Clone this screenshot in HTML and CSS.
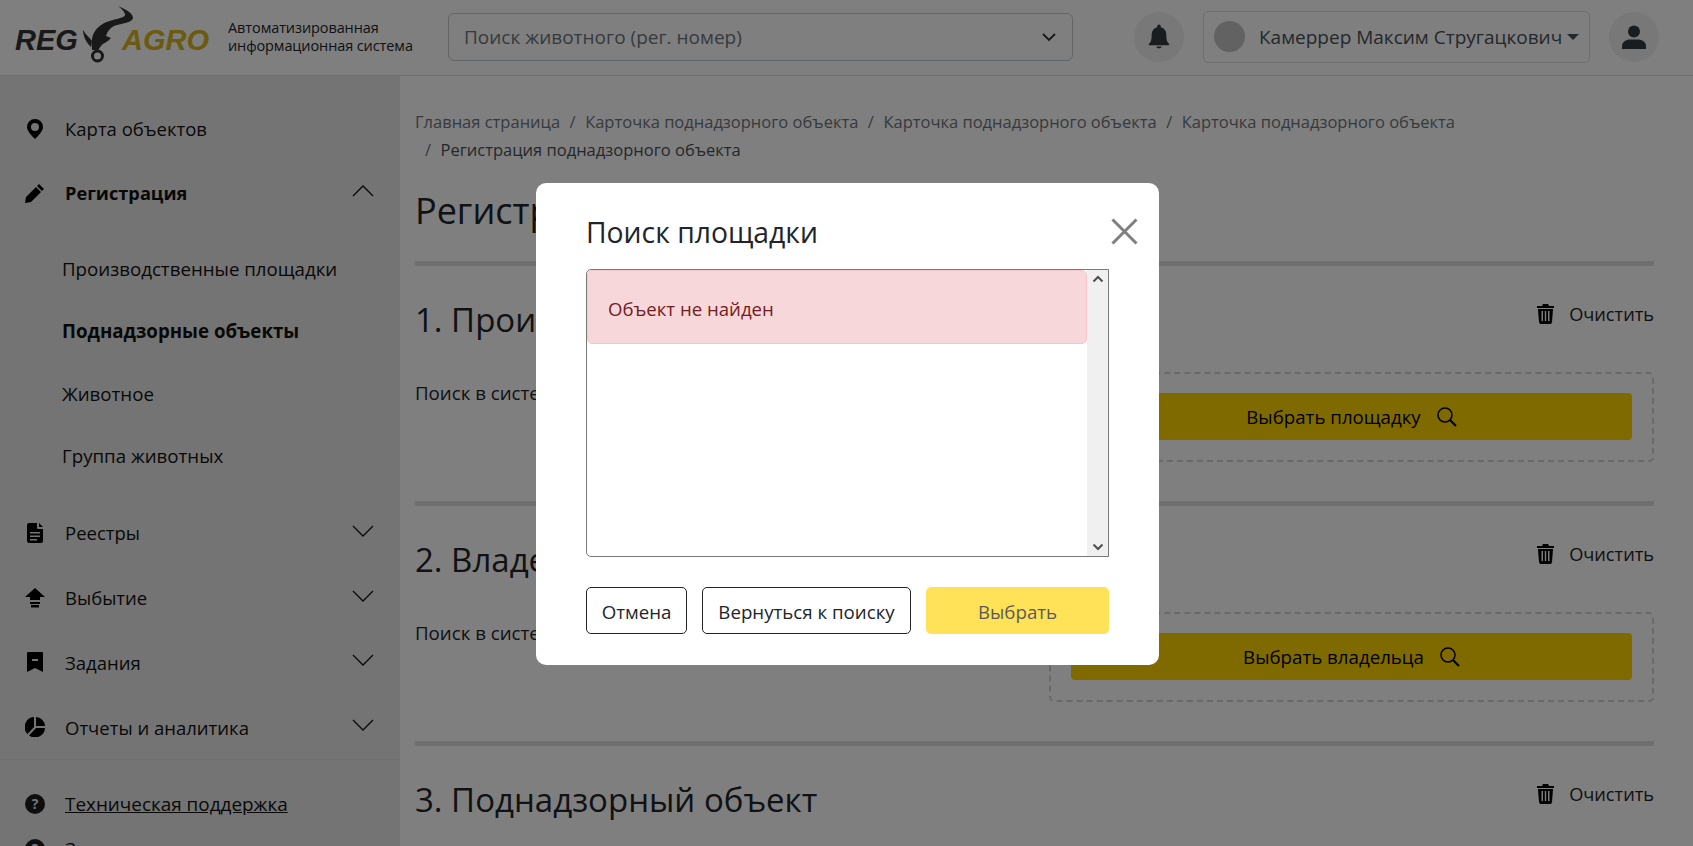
FILE: index.html
```html
<!DOCTYPE html>
<html lang="ru">
<head>
  <meta charset="UTF-8" />
  <title>RegAgro</title>
  <link rel="stylesheet" href="styles.css">
</head>
<body>
  <header class="topbar">
    <div class="logo">
      <span class="logo-reg">REG</span>
      <svg class="logo-bull" viewBox="82 4 55 60" width="55" height="60">
        <path fill="#333" d="M118 6C125 9 133 13 133 18C132 23 122 23 114 26C110 28 107 32 106 36L111 38C108 42 103 43 101 46L98 50L92 50C92 46 91 40 93 35C96 27 104 22 113 20C120 18 126 17 125 14C124 11 121 8 118 6Z"/>
        <path fill="#333" d="M83 30C86 35 90 38 92 41L91 47C87 43 83 37 83 30Z"/>
        <circle cx="97.500" cy="56" r="5" fill="none" stroke="#333" stroke-width="3"/>
      </svg>
      <span class="logo-agro">AGRO</span>
    </div>
    <div class="logo-caption">Автоматизированная<br>информационная система</div>
    <div class="animal-search">
      <span>Поиск животного (рег. номер)</span>
      <svg width="16" height="16" viewBox="0 0 16 16"><path d="M2 5l6 6 6-6" fill="none" stroke="#333" stroke-width="1.800"/></svg>
    </div>
    <div class="round-btn">
      <svg width="22" height="25" viewBox="0 0 24 26"><path fill="#343a40" d="M12 0a2 2 0 0 1 2 2v1c4 1 6 4 6 8 0 6 1 8 3 10 .5.6.2 1.500-.8 1.500H1.800c-1 0-1.300-.9-.8-1.500 2-2 3-4 3-10 0-4 2-7 6-8V2a2 2 0 0 1 2-2zM9 24h6a3 2 0 0 1-6 0z"/></svg>
    </div>
    <div class="user-box">
      <span class="avatar"></span>
      <span class="user-name">Камеррер Максим Стругацкович</span>
      <span class="caret"></span>
    </div>
    <div class="round-btn">
      <svg width="24" height="24" viewBox="0 0 24 24"><circle cx="12" cy="6.500" r="6" fill="#343a40"/><path fill="#343a40" d="M0 24v-3c0-4 4-6.500 8-6.500h8c4 0 8 2.500 8 6.500v3z"/></svg>
    </div>
  </header>

  <div class="layout">
    <aside class="sidebar">
      <nav class="nav">
        <a class="nav-item nav-first">
          <svg class="nav-icon" viewBox="0 0 16 20"><path fill-rule="evenodd" d="M8 0a8 8 0 0 1 8 8c0 4-5 9-8 12C5 17 0 12 0 8a8 8 0 0 1 8-8zm0 4a4 4 0 1 0 0 8 4 4 0 0 0 0-8z"/></svg>
          <span>Карта объектов</span>
        </a>
        <a class="nav-item nav-open">
          <svg class="nav-icon" viewBox="0 0 20 20"><path d="M14 1l5 5-2 2-5-5zM11 4l5 5L6 19l-6 1 1-6z"/></svg>
          <span>Регистрация</span>
          <svg class="chevron" viewBox="0 0 22 12"><path d="M1 11l10-10 10 10" fill="none" stroke="#111" stroke-width="1.300"/></svg>
        </a>
        <div class="subnav">
          <a class="sub-item">Производственные площадки</a>
          <a class="sub-item sub-active">Поднадзорные объекты</a>
          <a class="sub-item">Животное</a>
          <a class="sub-item">Группа животных</a>
        </div>
        <a class="nav-item">
          <svg class="nav-icon" viewBox="0 0 16 20"><path fill-rule="evenodd" d="M2 0h8v5a1 1 0 0 0 1 1h5v12a2 2 0 0 1-2 2H2a2 2 0 0 1-2-2V2a2 2 0 0 1 2-2zm10 0l4 4h-4zM3 9v1.500h10V9zm0 3.500V14h10v-1.500zM3 16v1.500h7V16z"/></svg>
          <span>Реестры</span>
          <svg class="chevron" viewBox="0 0 22 12"><path d="M1 1l10 10 10-10" fill="none" stroke="#111" stroke-width="1.300"/></svg>
        </a>
        <a class="nav-item">
          <svg class="nav-icon" viewBox="0 0 20 20"><path d="M10 0l10 9h-5v3H5V9H0zM5 14h10v2H5zM6 17h8v2.500H6z"/></svg>
          <span>Выбытие</span>
          <svg class="chevron" viewBox="0 0 22 12"><path d="M1 1l10 10 10-10" fill="none" stroke="#111" stroke-width="1.300"/></svg>
        </a>
        <a class="nav-item">
          <svg class="nav-icon" viewBox="0 0 16 20"><path fill-rule="evenodd" d="M1 0h14a1 1 0 0 1 1 1v19l-8-4-8 4V1a1 1 0 0 1 1-1zm4 7v2h6V7z"/></svg>
          <span>Задания</span>
          <svg class="chevron" viewBox="0 0 22 12"><path d="M1 1l10 10 10-10" fill="none" stroke="#111" stroke-width="1.300"/></svg>
        </a>
        <a class="nav-item">
          <svg class="nav-icon" viewBox="0 0 20 20"><path d="M9 0v10l-6.500 7A10 10 0 0 1 9 0zM11 0a9.500 9.500 0 0 1 9 9h-9zM11 11h9a10 10 0 0 1-16 7.500z"/></svg>
          <span>Отчеты и аналитика</span>
          <svg class="chevron" viewBox="0 0 22 12"><path d="M1 1l10 10 10-10" fill="none" stroke="#111" stroke-width="1.300"/></svg>
        </a>
      </nav>
      <div class="side-links">
        <a class="side-link">
          <svg class="nav-icon" viewBox="0 0 20 20"><circle cx="10" cy="10" r="10" fill="#1a1d21"/><text x="10" y="15" class="help-mark">?</text></svg>
          <span class="side-text">Техническая поддержка</span>
        </a>
        <a class="side-link">
          <svg class="nav-icon" viewBox="0 0 20 20"><circle cx="10" cy="10" r="10" fill="#1a1d21"/><text x="10" y="15" class="help-mark">?</text></svg>
          <span class="side-text">Заявки</span>
        </a>
      </div>
    </aside>

    <main class="content">
      <div class="crumbs">
        <a>Главная страница</a><i>/</i><a>Карточка поднадзорного объекта</a><i>/</i><a>Карточка поднадзорного объекта</a><i>/</i><a>Карточка поднадзорного объекта</a>
        <div class="crumb-last"><i>/</i><b>Регистрация поднадзорного объекта</b></div>
      </div>
      <h1 class="page-title">Регистрация поднадзорного объекта</h1>

      <section class="block">
        <div class="block-head">
          <h2>1. Производственная площадка</h2>
          <a class="clear">
            <svg width="17" height="20" viewBox="0 0 17 20"><path fill-rule="evenodd" d="M6 0h5l1 2h5v2H0V2h5zM1 5h15l-1 13a2 2 0 0 1-2 2H4a2 2 0 0 1-2-2zm3.500 2v10H6V7zm3.300 0v10h1.400V7zM11 7v10h1.500V7z"/></svg>
            <span>Очистить</span>
          </a>
        </div>
        <div class="block-row">
          <span>Поиск в системе</span>
          <div class="pick-box">
            <button class="pick-btn">Выбрать площадку
              <svg width="20" height="20" viewBox="0 0 20 20"><circle cx="8" cy="8" r="7" fill="none" stroke="#000" stroke-width="1.500"/><path d="M13 13l6 6" stroke="#000" stroke-width="2.200"/></svg>
            </button>
          </div>
        </div>
      </section>

      <section class="block">
        <div class="block-head">
          <h2>2. Владелец</h2>
          <a class="clear">
            <svg width="17" height="20" viewBox="0 0 17 20"><path fill-rule="evenodd" d="M6 0h5l1 2h5v2H0V2h5zM1 5h15l-1 13a2 2 0 0 1-2 2H4a2 2 0 0 1-2-2zm3.500 2v10H6V7zm3.300 0v10h1.400V7zM11 7v10h1.500V7z"/></svg>
            <span>Очистить</span>
          </a>
        </div>
        <div class="block-row">
          <span>Поиск в системе</span>
          <div class="pick-box">
            <button class="pick-btn">Выбрать владельца
              <svg width="20" height="20" viewBox="0 0 20 20"><circle cx="8" cy="8" r="7" fill="none" stroke="#000" stroke-width="1.500"/><path d="M13 13l6 6" stroke="#000" stroke-width="2.200"/></svg>
            </button>
          </div>
        </div>
      </section>

      <section class="block">
        <div class="block-head">
          <h2>3. Поднадзорный объект</h2>
          <a class="clear">
            <svg width="17" height="20" viewBox="0 0 17 20"><path fill-rule="evenodd" d="M6 0h5l1 2h5v2H0V2h5zM1 5h15l-1 13a2 2 0 0 1-2 2H4a2 2 0 0 1-2-2zm3.500 2v10H6V7zm3.300 0v10h1.400V7zM11 7v10h1.500V7z"/></svg>
            <span>Очистить</span>
          </a>
        </div>
      </section>
    </main>
  </div>

  <div class="overlay">
    <div class="modal">
      <div class="modal-head">
        <h3>Поиск площадки</h3>
        <svg class="modal-close" width="27" height="27" viewBox="0 0 27 27"><path d="M1.500 1.500l24 24M25.500 1.500l-24 24" stroke="#7f7f7f" stroke-width="3" fill="none"/></svg>
      </div>
      <div class="result-list">
        <div class="result-body">
          <div class="alert">Объект не найден</div>
        </div>
        <div class="scroll-track">
          <svg width="12" height="8" viewBox="0 0 12 8"><path d="M1.500 6.500L6 2l4.500 4.500" fill="none" stroke="#505050" stroke-width="2"/></svg>
          <svg width="12" height="8" viewBox="0 0 12 8"><path d="M1.500 1.500L6 6l4.500-4.500" fill="none" stroke="#505050" stroke-width="2"/></svg>
        </div>
      </div>
      <div class="modal-foot">
        <button class="btn-outline btn-cancel">Отмена</button>
        <button class="btn-outline btn-back">Вернуться к поиску</button>
        <button class="btn-choose" disabled>Выбрать</button>
      </div>
    </div>
  </div>
</body>
</html>
```

FILE: styles.css
```css
* {
  box-sizing: border-box;
}

html, body {
  height: 100%;
}

body {
  margin: 0;
  overflow: hidden;
  background: #fff;
  color: #212529;
  font-family: "Open Sans", "Noto Sans", sans-serif;
  font-size: 17px;
}

/* top bar */
.topbar {
  display: flex;
  align-items: center;
  height: 76px;
  padding: 0 34px 2px 15px;
  border-bottom: 1px solid #dcdcdc;
  background: #fff;
}

.logo {
  display: flex;
  align-items: center;
  flex: none;
  width: 193px;
  height: 60px;
  font-family: "Liberation Sans", sans-serif;
  font-size: 29px;
  font-weight: 700;
  font-style: italic;
}

.logo-reg {
  width: 62px;
  margin-top: 7px;
  color: #333;
}

.logo-bull {
  flex: none;
  margin: -6px -16px 0 5px;
}

.logo-agro {
  margin-top: 7px;
  margin-left: 1px;
  color: #d8b41e;
}

.logo-caption {
  flex: none;
  width: 220px;
  margin-left: 20px;
  font-size: 14.500px;
  line-height: 18px;
  letter-spacing: -0.1px;
}

.animal-search {
  display: flex;
  align-items: center;
  justify-content: space-between;
  flex: none;
  width: 625px;
  height: 48px;
  padding: 0 15px;
  border: 1px solid #c4c8cc;
  border-radius: 6px;
  color: #6c757d;
  font-size: 19px;
}

.round-btn {
  display: flex;
  align-items: center;
  justify-content: center;
  flex: none;
  width: 50px;
  height: 50px;
  border-radius: 50%;
  background: #f1f1f1;
}

.animal-search + .round-btn {
  margin-left: 61px;
}

.user-box {
  display: flex;
  align-items: center;
  flex: none;
  width: 387px;
  height: 52px;
  margin: 0 19px;
  padding: 0 10px;
  border: 1px solid #dcdcdc;
  border-radius: 5px;
}

.avatar {
  flex: none;
  width: 31px;
  height: 31px;
  border-radius: 50%;
  background: #c4c4c4;
}

.user-name {
  margin-left: 14px;
  color: #495057;
  font-size: 19px;
  white-space: nowrap;
}

.caret {
  margin-left: 5px;
  border-top: 6px solid #495057;
  border-left: 6px solid transparent;
  border-right: 6px solid transparent;
}

/* page */
.layout {
  display: flex;
  height: calc(100% - 76px);
}

.sidebar {
  flex: none;
  width: 400px;
  padding-top: 21px;
  background: #e9e9e9;
  color: #111;
}

.nav-item {
  display: flex;
  align-items: center;
  height: 64.800px;
  padding: 0 26px 0 26px;
  font-size: 18.500px;
}

.nav-first {
  height: 63.500px;
}

.nav-open {
  height: 64.500px;
  font-size: 18.200px;
  font-weight: 700;
}

.nav-icon {
  flex: none;
  width: 20px;
  height: 20px;
  margin-right: 20px;
  margin-left: -1px;
}

.nav-item .chevron {
  width: 22px;
  height: 12px;
  margin-left: auto;
  margin-top: -4px;
}

.subnav {
  padding: 12px 0 13.500px 62px;
}

.sub-item {
  display: flex;
  align-items: center;
  height: 62.500px;
  font-size: 18.700px;
}

.sub-active {
  font-weight: 700;
}

.side-links {
  margin-top: -1px;
  padding: 22px 26px 0;
  border-top: 1px solid #dcdcdc;
}

.side-link {
  display: flex;
  align-items: center;
  height: 45px;
  font-size: 18.900px;
}

.side-text {
  text-decoration: underline;
}

.help-mark {
  fill: #e9e9e9;
  font-size: 14px;
  font-weight: 700;
  text-anchor: middle;
}

.content {
  flex: 1;
  min-width: 0;
  padding: 32px 39px 0 15px;
}

.crumbs {
  color: #6c757d;
  font-size: 16.500px;
  line-height: 28px;
  white-space: nowrap;
}

.crumbs i {
  margin: 0 9.500px;
  font-style: normal;
}

.crumb-last i {
  margin-left: 10px;
}

.crumb-last b {
  color: #495057;
  font-weight: 400;
}

.page-title {
  margin: 23px 0 0;
  padding-bottom: 26px;
  font-size: 36px;
  font-weight: 400;
  line-height: 48px;
  white-space: nowrap;
}

.block {
  height: 240px;
  padding-top: 31px;
  border-top: 5px solid #dedede;
}

.block-head {
  display: flex;
  align-items: center;
  justify-content: space-between;
  height: 44px;
}

.block-head h2 {
  margin: 0;
  font-size: 33px;
  font-weight: 400;
}

.clear {
  display: flex;
  align-items: center;
  gap: 15px;
  margin-top: -10px;
  font-size: 18.200px;
}

.block-row {
  display: flex;
  justify-content: space-between;
  margin-top: 31px;
}

.block-row > span {
  padding-top: 8px;
  font-size: 18.700px;
}

.pick-box {
  width: 605px;
  height: 90px;
  padding: 19px 20px;
  border: 2px dashed #d2d2d2;
  border-radius: 5px;
}

.pick-btn {
  display: flex;
  align-items: center;
  justify-content: center;
  gap: 16px;
  width: 100%;
  height: 47px;
  border: 0;
  border-radius: 4px;
  background: #ffd400;
  color: #000;
  font: inherit;
  font-size: 18.700px;
}

/* modal */
.overlay {
  position: fixed;
  inset: 0;
  display: flex;
  justify-content: center;
  align-items: flex-start;
  padding: 183px 0 0 2px;
  background: rgba(0, 0, 0, 0.5);
}

.modal {
  width: 623px;
  height: 482px;
  padding: 16px 50px 0;
  border-radius: 10px;
  background: #fff;
}

.modal-head {
  display: flex;
  align-items: center;
  justify-content: space-between;
  height: 70px;
}

.modal-head h3 {
  margin: 0 0 4px;
  font-size: 28.300px;
  font-weight: 400;
}

.modal-close {
  margin-right: -29px;
  margin-top: -5px;
}

.result-list {
  display: flex;
  height: 288px;
  border: 1px solid #7a7a7a;
  border-radius: 5px 0 0 5px;
  overflow: hidden;
}

.result-body {
  flex: 1;
}

.alert {
  display: flex;
  align-items: center;
  height: 74px;
  padding: 2px 0 0 20px;
  border: 1px solid #f5c6cb;
  border-radius: 5px;
  background: #f8d7da;
  color: #721c24;
  font-size: 18.600px;
}

.scroll-track {
  display: flex;
  flex-direction: column;
  align-items: center;
  justify-content: space-between;
  width: 21px;
  padding: 5px 0;
  background: #f0f0f0;
}

.modal-foot {
  display: flex;
  gap: 15px;
  margin-top: 30px;
}

.modal-foot button {
  height: 47px;
  padding: 2px 0 0;
  border-radius: 5px;
  font: inherit;
  font-size: 18.700px;
  white-space: nowrap;
}

.btn-outline {
  border: 1px solid #212529;
  background: #fff;
  color: #212529;
}

.btn-cancel {
  width: 101px;
}

.btn-back {
  width: 209px;
}

.btn-choose {
  width: 183px;
  border: 0;
  background: #ffd400;
  color: #000;
  opacity: 0.65;
}
```
